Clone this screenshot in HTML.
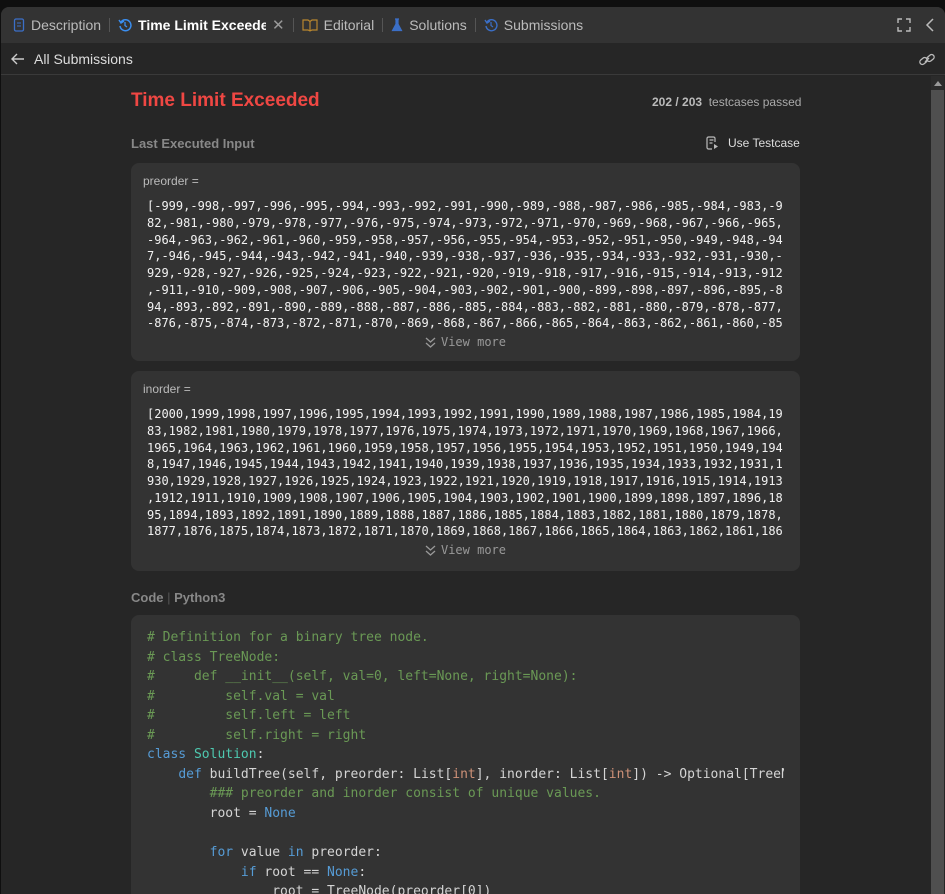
<!DOCTYPE html>
<html style="overflow:hidden;width:945px;height:894px"><head><meta charset="utf-8"><style>
*{margin:0;padding:0;box-sizing:border-box}
body{width:945px;height:894px;background:#0f0f0f;font-family:"Liberation Sans",sans-serif;overflow:hidden;position:relative}
.frame{position:absolute;left:1px;top:7px;width:944px;height:887px;background:#262626;border-radius:8px 8px 0 0;overflow:hidden}
.tabs{height:36px;background:#333;display:flex;align-items:center;font-size:14px;color:#bbb;position:relative}
.tab{display:flex;align-items:center;gap:6px;padding:0 8px}
.sep{width:1px;height:14px;background:#555}
.sub{height:32px;border-bottom:1px solid #3a3a3a;display:flex;align-items:center;font-size:14px;color:#ddd;position:relative}
.scroll{position:absolute;left:931px;top:76px;width:13px;height:818px;background:#2b2b2b}
.thumb{position:absolute;left:931px;top:90px;width:13px;height:804px;background:#4f4f4f}
.col{position:absolute;left:131px;width:669px}
.box{background:#333;border-radius:8px;position:absolute;left:131px;width:669px;overflow:hidden}
.lbl{font-size:12px;color:#bbb;position:absolute;left:12px;top:11px}
.nums{position:absolute;left:16px;top:35px;height:134px;font-family:"DejaVu Sans Mono","Liberation Mono",monospace;font-size:12px;line-height:16.75px;color:#f2f2f2;white-space:pre;overflow:hidden}
.vm{position:absolute;left:0;right:0;text-align:center;font-family:"DejaVu Sans Mono",monospace;font-size:12px;color:#999;display:flex;justify-content:center;align-items:center;gap:5px}
.code{font-family:"DejaVu Sans Mono","Liberation Mono",monospace;font-size:13px;line-height:19.55px;color:#d4d4d4;white-space:pre;position:absolute;left:16px;top:13px;width:637px;overflow:hidden}
.c{color:#6a9955}.k{color:#569cd6}.t{color:#4ec9b0}.o{color:#ce9178}
</style></head><body>
<div class="frame">
 <div class="tabs">
  <div class="tab" style="padding-left:12px"><svg width="12" height="14"><rect x="1.5" y="1" width="9" height="12" rx="1.5" fill="none" stroke="#3b6fc7" stroke-width="1.3"/><line x1="4" y1="5" x2="8" y2="5" stroke="#3b6fc7"/><line x1="4" y1="8" x2="8" y2="8" stroke="#3b6fc7"/></svg>Description</div>
  <div class="sep"></div>
  <div class="tab" style="color:#fff;font-weight:bold"><svg width="14" height="14"><path d="M3 4 A5.5 5.5 0 1 1 2 8" fill="none" stroke="#3a8ef0" stroke-width="1.5"/><path d="M1 2 L3 5 L6 3" fill="none" stroke="#3a8ef0" stroke-width="1.5"/><path d="M7 4v3.5l2 1.5" fill="none" stroke="#3a8ef0" stroke-width="1.3"/></svg><span style="width:128px;overflow:hidden;white-space:nowrap">Time Limit Exceeded</span><span style="color:#999;font-weight:normal;font-size:15px">✕</span></div>
  <div class="sep"></div>
  <div class="tab"><svg width="16" height="14"><path d="M1 2h5l2 1.5L10 2h5v10h-5l-2 1-2-1H1z M8 3.5V13" fill="none" stroke="#b8862f" stroke-width="1.2"/></svg>Editorial</div>
  <div class="sep"></div>
  <div class="tab"><svg width="12" height="14"><path d="M4 1h4M5 1v5L1.5 12.5h9L7 6V1" fill="#3b6fc7" stroke="#3b6fc7" stroke-width="1.2"/></svg>Solutions</div>
  <div class="sep"></div>
  <div class="tab"><svg width="14" height="14"><path d="M3 4 A5.5 5.5 0 1 1 2 8" fill="none" stroke="#3b6fc7" stroke-width="1.4"/><path d="M1 2 L3 5 L6 3" fill="none" stroke="#3b6fc7" stroke-width="1.4"/><path d="M7 4v3.5l2 1.5" fill="none" stroke="#3b6fc7" stroke-width="1.2"/></svg>Submissions</div>
  <svg style="position:absolute;left:896px;top:11px" width="14" height="14"><path d="M1 5V1h4M9 1h4v4M13 9v4H9M5 13H1V9" fill="none" stroke="#bbb" stroke-width="1.4"/></svg>
  <svg style="position:absolute;left:924px;top:11px" width="10" height="14"><path d="M8 1L2 7l6 6" fill="none" stroke="#bbb" stroke-width="1.5"/></svg>
 </div>
 <div class="sub"><svg style="margin:0 9px 0 10px" width="14" height="12"><path d="M13 6H2M6 1L1 6l5 5" fill="none" stroke="#ccc" stroke-width="1.4"/></svg>All Submissions
  <svg style="position:absolute;left:917px;top:9px" width="18" height="16"><path d="M7 10l4-4" stroke="#bbb" stroke-width="1.3"/><rect x="1.5" y="6.5" width="8" height="5" rx="2.5" transform="rotate(-40 5.5 9)" fill="none" stroke="#bbb" stroke-width="1.3"/><rect x="8.5" y="3.5" width="8" height="5" rx="2.5" transform="rotate(-40 12.5 6)" fill="none" stroke="#bbb" stroke-width="1.3"/></svg>
 </div>
</div>
<div class="scroll"></div><div class="thumb"></div>
<svg style="position:absolute;left:934px;top:81px" width="8" height="5"><path d="M0 5L4 0L8 5z" fill="#999"/></svg>

<div class="col" style="top:90px;font-size:19px;color:#ef4743;font-weight:bold">Time Limit Exceeded</div>
<div style="position:absolute;left:652px;top:95px;font-size:12px;color:#aaa"><b style="color:#bbb">202 / 203</b>&nbsp; testcases passed</div>
<div class="col" style="top:136px;font-size:13px;color:#888;font-weight:bold">Last Executed Input</div>
<div style="position:absolute;left:706px;top:136px;font-size:12px;color:#ddd;display:flex;align-items:center;gap:9px"><svg width="13" height="14"><path d="M9 6V2.5A1.5 1.5 0 0 0 7.5 1h-5A1.5 1.5 0 0 0 1 2.5v9A1.5 1.5 0 0 0 2.5 13H6M3.5 4h4M3.5 7h3" fill="none" stroke="#bbb" stroke-width="1.2"/><path d="M8 8l4 2.5L8 13z" fill="#bbb"/></svg>Use Testcase</div>

<div class="box" style="top:163px;height:198px">
 <div class="lbl">preorder =</div>
 <div class="nums">[-999,-998,-997,-996,-995,-994,-993,-992,-991,-990,-989,-988,-987,-986,-985,-984,-983,-9
82,-981,-980,-979,-978,-977,-976,-975,-974,-973,-972,-971,-970,-969,-968,-967,-966,-965,
-964,-963,-962,-961,-960,-959,-958,-957,-956,-955,-954,-953,-952,-951,-950,-949,-948,-94
7,-946,-945,-944,-943,-942,-941,-940,-939,-938,-937,-936,-935,-934,-933,-932,-931,-930,-
929,-928,-927,-926,-925,-924,-923,-922,-921,-920,-919,-918,-917,-916,-915,-914,-913,-912
,-911,-910,-909,-908,-907,-906,-905,-904,-903,-902,-901,-900,-899,-898,-897,-896,-895,-8
94,-893,-892,-891,-890,-889,-888,-887,-886,-885,-884,-883,-882,-881,-880,-879,-878,-877,
-876,-875,-874,-873,-872,-871,-870,-869,-868,-867,-866,-865,-864,-863,-862,-861,-860,-85</div>
 <div class="vm" style="top:172px;height:14px"><svg width="11" height="11"><path d="M1 1l4.5 4 4.5-4M1 6l4.5 4 4.5-4" fill="none" stroke="#999" stroke-width="1.3"/></svg>View more</div>
</div>

<div class="box" style="top:371px;height:200px">
 <div class="lbl">inorder =</div>
 <div class="nums">[2000,1999,1998,1997,1996,1995,1994,1993,1992,1991,1990,1989,1988,1987,1986,1985,1984,19
83,1982,1981,1980,1979,1978,1977,1976,1975,1974,1973,1972,1971,1970,1969,1968,1967,1966,
1965,1964,1963,1962,1961,1960,1959,1958,1957,1956,1955,1954,1953,1952,1951,1950,1949,194
8,1947,1946,1945,1944,1943,1942,1941,1940,1939,1938,1937,1936,1935,1934,1933,1932,1931,1
930,1929,1928,1927,1926,1925,1924,1923,1922,1921,1920,1919,1918,1917,1916,1915,1914,1913
,1912,1911,1910,1909,1908,1907,1906,1905,1904,1903,1902,1901,1900,1899,1898,1897,1896,18
95,1894,1893,1892,1891,1890,1889,1888,1887,1886,1885,1884,1883,1882,1881,1880,1879,1878,
1877,1876,1875,1874,1873,1872,1871,1870,1869,1868,1867,1866,1865,1864,1863,1862,1861,186</div>
 <div class="vm" style="top:172px;height:14px"><svg width="11" height="11"><path d="M1 1l4.5 4 4.5-4M1 6l4.5 4 4.5-4" fill="none" stroke="#999" stroke-width="1.3"/></svg>View more</div>
</div>

<div class="col" style="top:590px;font-size:13px;color:#888;font-weight:bold">Code <span style="color:#555;font-weight:normal">|</span> Python3</div>

<div class="box" style="top:615px;height:279px;border-radius:8px 8px 0 0">
<div class="code"><span class="c"># Definition for a binary tree node.
# class TreeNode:
#     def __init__(self, val=0, left=None, right=None):
#         self.val = val
#         self.left = left
#         self.right = right</span>
<span class="k">class</span> <span class="t">Solution</span>:
    <span class="k">def</span> buildTree(self, preorder: List[<span class="o">int</span>], inorder: List[<span class="o">int</span>]) -&gt; Optional[TreeNode]:
        <span class="c">### preorder and inorder consist of unique values.</span>
        root = <span class="k">None</span>

        <span class="k">for</span> value <span class="k">in</span> preorder:
            <span class="k">if</span> root == <span class="k">None</span>:
                root = TreeNode(preorder[0])</div>
</div>
</body></html>
